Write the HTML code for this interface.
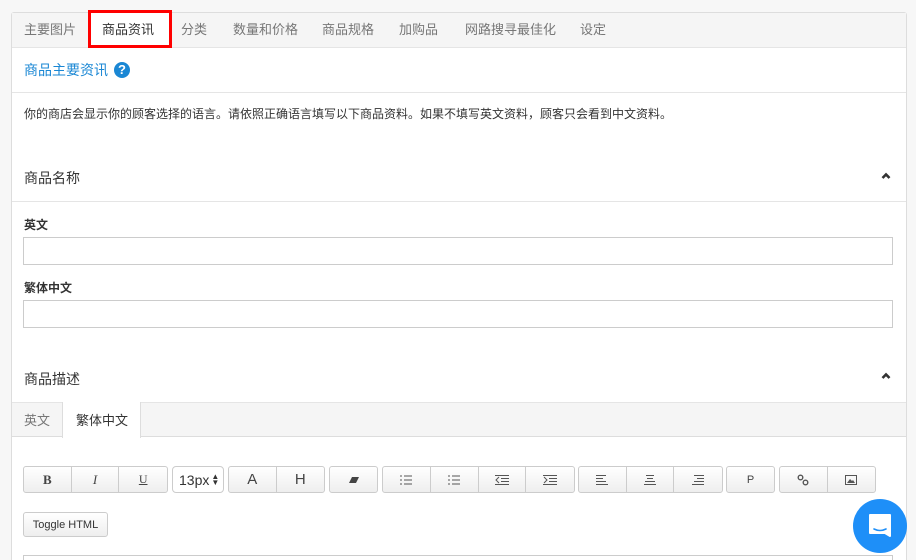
<!DOCTYPE html>
<html><head><meta charset="utf-8"><style>
*{box-sizing:border-box;margin:0;padding:0}
html,body{width:916px;height:560px;overflow:hidden}
body{background:#f7f7f7;font-family:"Liberation Sans","Noto Sans CJK SC",sans-serif;position:relative}
.a{position:absolute;line-height:1.2}
#panel{left:11px;top:12px;width:896px;height:548px;background:#fff;border:1px solid #ddd;border-bottom:none;border-radius:3px 3px 0 0}
#tabbar{left:12px;top:13px;width:894px;height:35px;background:#f5f5f5}
.tab{position:absolute;top:22px;font-size:13px;line-height:16px;color:#777;white-space:nowrap}
.hr{position:absolute;left:12px;width:894px;height:1px;background:#e5e5e5}
.sec{position:absolute;left:24px;font-size:14px;line-height:16px;color:#333}
.lbl{position:absolute;left:24px;font-size:12px;line-height:14px;font-weight:bold;color:#333}
.inp{position:absolute;left:23px;width:870px;height:28px;border:1px solid #ccc;background:#fff}
.chev{position:absolute;left:881px;width:10px;height:10px}
.btn{position:absolute;top:466px;height:27px;border:1px solid #ccc;background:linear-gradient(#fff,#eee);border-radius:3px;font-size:13px;color:#333;display:flex;align-items:center;justify-content:center}
.g{display:flex;position:absolute;top:466px;height:27px;border:1px solid #ccc;border-radius:3px;background:linear-gradient(#fff,#eee);overflow:hidden}
.g div{width:48px;border-right:1px solid #ccc;display:flex;align-items:center;justify-content:center;font-size:13px;color:#444}
.g div:last-child{border-right:none}
</style></head><body>
<div class="a" id="panel"></div>
<div class="a" id="tabbar"></div>
<div class="hr" style="top:47px"></div>
<div class="a" style="left:88px;top:13px;width:83px;height:35px;background:#fff"></div>
<div class="a" style="left:88px;top:10px;width:84px;height:38px;border:3px solid #f00"></div>
<span class="tab" style="left:24px">主要图片</span>
<span class="tab" style="left:102px;color:#333">商品资讯</span>
<span class="tab" style="left:181px">分类</span>
<span class="tab" style="left:233px">数量和价格</span>
<span class="tab" style="left:322px">商品规格</span>
<span class="tab" style="left:399px">加购品</span>
<span class="tab" style="left:465px">网路搜寻最佳化</span>
<span class="tab" style="left:580px">设定</span>
<span class="a" style="left:24px;top:62px;font-size:14px;line-height:16px;color:#1a87d4">商品主要资讯</span>
<div class="a" style="left:114px;top:62px;width:16px;height:16px;border-radius:50%;background:#1a87d4;color:#fff;font-size:13px;font-weight:bold;text-align:center;line-height:16px">?</div>
<div class="hr" style="top:92px"></div>
<span class="a" style="left:24px;top:107px;font-size:12px;line-height:14px;color:#333">你的商店会显示你的顾客选择的语言。请依照正确语言填写以下商品资料。如果不填写英文资料，顾客只会看到中文资料。</span>
<span class="sec" style="top:170px">商品名称</span>
<svg class="chev" style="top:171px" viewBox="0 0 10 10"><path d="M1.5 7L5 3.5L8.5 7" stroke="#333" stroke-width="2.6" fill="none"/></svg>
<div class="hr" style="top:201px"></div>
<span class="lbl" style="top:218px">英文</span>
<div class="inp" style="top:237px"></div>
<span class="lbl" style="top:281px">繁体中文</span>
<div class="inp" style="top:300px"></div>
<span class="sec" style="top:371px">商品描述</span>
<svg class="chev" style="top:371px" viewBox="0 0 10 10"><path d="M1.5 7L5 3.5L8.5 7" stroke="#333" stroke-width="2.6" fill="none"/></svg>
<div class="a" style="left:12px;top:402px;width:894px;height:35px;background:#f5f5f5;border-top:1px solid #e5e5e5;border-bottom:1px solid #ddd"></div>
<div class="a" style="left:62px;top:402px;width:79px;height:36px;background:#fff;border-left:1px solid #ddd;border-right:1px solid #ddd"></div>
<span class="a" style="left:24px;top:413px;font-size:13px;line-height:16px;color:#777">英文</span>
<span class="a" style="left:76px;top:413px;font-size:13px;line-height:16px;color:#333">繁体中文</span>
<div class="g" style="left:23px;width:145px"><div style="font-family:'Liberation Serif';font-weight:bold">B</div><div style="font-family:'Liberation Serif';font-style:italic">I</div><div style="font-family:'Liberation Serif';text-decoration:underline;font-size:12px">U</div></div>
<div class="btn" style="left:172px;width:52px;background:#fff;border-radius:4px;font-size:14px;justify-content:flex-start;padding-left:6px">13px<span style="font-size:8px;margin-left:2px;line-height:6px">▲<br>▼</span></div>
<div class="g" style="left:228px;width:97px"><div style="font-size:15px">A</div><div style="font-size:15px">H</div></div>
<div class="g" style="left:329px;width:49px"><div><svg width="12" height="8"><path d="M4 1H11L8 7H1Z" fill="#444"/></svg></div></div>
<div class="g" style="left:382px;width:193px">
<div><svg width="12" height="10"><path d="M0 1h2M0 5h2M0 9h2M4 1h8M4 5h8M4 9h8" stroke="#555"/></svg></div>
<div><svg width="12" height="10"><path d="M0 1h2M0 5h2M0 9h2M4 1h8M4 5h8M4 9h8" stroke="#555"/></svg></div>
<div><svg width="14" height="10"><path d="M0 0.5h14M6 3.5h8M6 6.5h8M0 9.5h14M4 2L1 5l3 3" stroke="#555" fill="none"/></svg></div>
<div><svg width="14" height="10"><path d="M0 0.5h14M6 3.5h8M6 6.5h8M0 9.5h14M1 2l3 3-3 3" stroke="#555" fill="none"/></svg></div></div>
<div class="g" style="left:578px;width:145px">
<div><svg width="12" height="10"><path d="M0 .5h10M0 3.5h7M0 6.5h10M0 9.5h12" stroke="#555"/></svg></div>
<div><svg width="12" height="10"><path d="M2 .5h8M3 3.5h6M1 6.5h10M0 9.5h12" stroke="#555"/></svg></div>
<div><svg width="12" height="10"><path d="M2 .5h10M5 3.5h7M2 6.5h10M0 9.5h12" stroke="#555"/></svg></div></div>
<div class="g" style="left:726px;width:49px"><div style="font-size:11px">P</div></div>
<div class="g" style="left:779px;width:97px">
<div><svg width="12" height="12"><circle cx="3.5" cy="3.5" r="2.3" stroke="#555" fill="none" stroke-width="1.4"/><circle cx="8.5" cy="8.5" r="2.3" stroke="#555" fill="none" stroke-width="1.4"/></svg></div>
<div><svg width="12" height="10"><rect x=".5" y=".5" width="11" height="9" stroke="#555" fill="none"/><path d="M2 8l3-4 2 2 1-1 2 3z" fill="#555"/></svg></div></div>
<div class="btn" style="left:23px;top:512px;width:85px;height:25px;font-size:11px">Toggle HTML</div>
<div class="a" style="left:23px;top:555px;width:870px;height:5px;border:1px solid #ccc;border-bottom:none"></div>
<div class="a" style="left:853px;top:499px;width:54px;height:54px;border-radius:50%;background:#1e8ff8"></div>
<svg class="a" style="left:866px;top:512px" width="28" height="28" viewBox="0 0 28 28"><path d="M4 3h20v21l-5-3H4z" fill="#fff" stroke="#fff" stroke-linejoin="round" stroke-width="2"/><path d="M8 17q6 3 12 0" stroke="#1e8ff8" stroke-width="1.6" fill="none" stroke-linecap="round"/></svg>
</body></html>
